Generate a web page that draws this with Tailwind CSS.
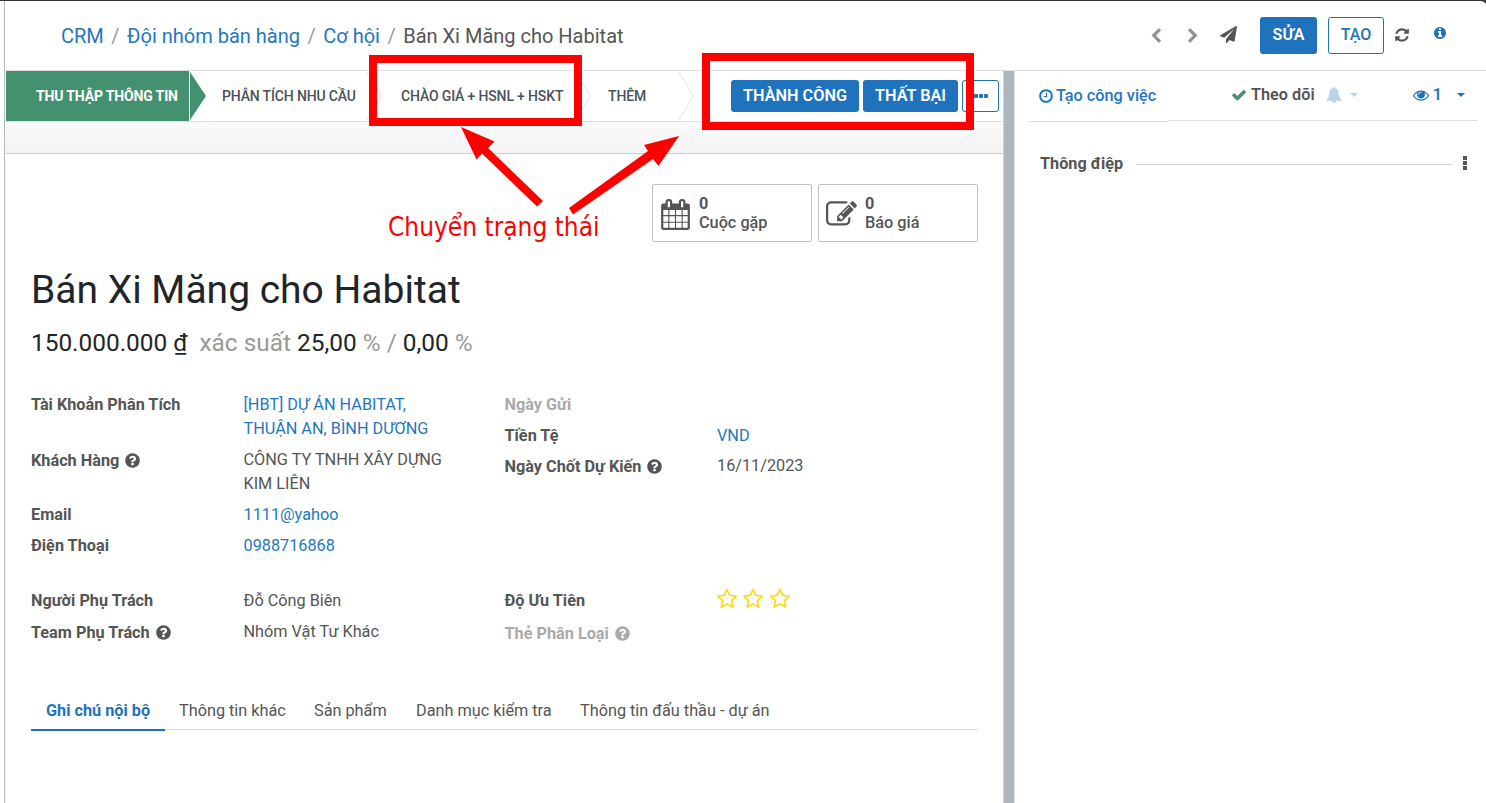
<!DOCTYPE html>
<html lang="vi">
<head>
<meta charset="utf-8">
<title>Bán Xi Măng cho Habitat</title>
<script src="https://cdn.jsdelivr.net/npm/@tailwindcss/browser@4"></script>
</head>
<body class="relative h-[803px] w-[1486px] overflow-hidden bg-white font-['Roboto','Noto_Sans',sans-serif] text-base leading-6 text-[#555]">
<svg class="hidden">
  <symbol id="question" viewBox="0 0 1792 1792"><path d="M1024 1376v-192q0-14-9-23t-23-9h-192q-14 0-23 9t-9 23v192q0 14 9 23t23 9h192q14 0 23-9t9-23zm256-672q0-88-55.500-163t-138.500-116-170-41q-243 0-371 213-15 24 8 42l132 100q7 6 19 6 16 0 25-12 53-68 86-92 34-24 86-24 48 0 85.500 26t37.500 59q0 38-20 61t-68 45q-63 28-115.500 86.500t-52.500 125.500v36q0 14 9 23t23 9h192q14 0 23-9t9-23q0-19 21.500-49.500t54.500-49.500q32-18 49-28.500t46-35 44.500-48 28-60.500 12.500-81zm384 192q0 209-103 385.500t-279.500 279.500-385.500 103-385.500-103-279.500-279.500-103-385.500 103-385.500 279.500-279.500 385.500-103 385.500 103 279.500 279.500 103 385.500z"/></symbol>
  <symbol id="star" viewBox="0 0 1792 1792"><path d="M1201 1004l306-297-422-62-189-382-189 382-422 62 306 297-73 421 378-199 377 199zm527-357q0 22-26 48l-363 354 86 500q1 7 1 20 0 50-41 50-19 0-40-12l-449-236-449 236q-22 12-40 12-21 0-31.500-14.500t-10.500-35.500q0-6 2-20l86-500-364-354q-25-27-25-48 0-37 56-46l502-73 225-455q19-41 49-41t49 41l225 455 502 73q56 9 56 46z"/></symbol>
</svg>
<div class="h-px bg-[#3a3638]"></div>
<svg class="absolute right-0 top-px h-[3px] w-1.5 fill-[#3a3638]" viewBox="0 0 6 3"><path d="M0 0H6V3Q4 0 0 0Z"/></svg>
<div class="ml-1 flex h-[802px] flex-col border-l border-[#b9babd]">
  <header class="flex h-[70px] shrink-0 items-start border-b border-[#dcdfe4]">
    <nav class="ml-14 mt-5 flex h-[30px] items-center gap-[7.500px] text-[20px] leading-[30px] text-[#1f77be]">
      <span>CRM</span><span class="text-[#999]">/</span><span>Đội nhóm bán hàng</span><span class="text-[#999]">/</span><span>Cơ hội</span><span class="text-[#999]">/</span><span class="text-[#555]">Bán Xi Măng cho Habitat</span>
    </nav>
    <div class="ml-auto mr-[39px] mt-4 flex h-[37px] items-center">
      <svg class="mr-[21px] size-4 fill-[#929292]" viewBox="0 0 1792 1792"><path d="M1427 301l-531 531 531 531q19 19 19 45t-19 45l-166 166q-19 19-45 19t-45-19l-742-742q-19-19-19-45t19-45l742-742q19-19 45-19t45 19l166 166q19 19 19 45t-19 45z"/></svg>
      <svg class="mr-[19px] size-4 fill-[#929292]" viewBox="0 0 1792 1792"><path d="M1363 877l-742 742q-19 19-45 19t-45-19l-166-166q-19-19-19-45t19-45l531-531-531-531q-19-19-19-45t19-45l166-166q19-19 45-19t45 19l742 742q19 19 19 45t-19 45z"/></svg>
      <svg class="mr-[23px] size-[17px] -translate-y-px fill-[#555]" viewBox="0 0 1792 1792"><path d="M1764 11q33 24 27 64l-256 1536q-5 29-32 45-14 8-31 8-11 0-24-5l-453-185-242 295q-18 23-49 23-13 0-22-4-19-7-30.500-23.500t-11.500-36.500v-349l864-1059-1069 925-395-162q-37-14-40-55-2-40 32-59l1664-960q15-9 32-9 20 0 36 11z"/></svg>
      <button class="mr-[11px] h-[37px] w-[57px] rounded-[3px] bg-[#1f73bc] pb-0.5 font-semibold text-white">SỬA</button>
      <button class="mr-[10px] h-[37px] w-14 rounded-[3px] border border-[#1f73bc] pb-0.5 font-medium text-[#1f73bc]">TẠO</button>
      <svg class="mr-[23px] size-4 -translate-y-px fill-[#555]" viewBox="0 0 1792 1792"><path d="M1639 1056q0 5-1 7-64 268-268 434.500t-478 166.500q-146 0-282.500-55t-243.500-157l-129 129q-19 19-45 19t-45-19-19-45v-448q0-26 19-45t45-19h448q26 0 45 19t19 45-19 45l-137 137q71 66 161 102t187 36q134 0 250-65t186-179q11-17 53-117 8-23 30-23h192q13 0 22.500 9.500t9.500 22.500zm25-800v448q0 26-19 45t-45 19h-448q-26 0-45-19t-19-45 19-45l138-138q-148-137-349-137-134 0-250 65t-186 179q-11 17-53 117-8 23-30 23h-199q-13 0-22.500-9.500t-9.500-22.500v-7q65-268 270-434.500t480-166.500q146 0 284 55.500t245 156.500l130-129q19-19 45-19t45 19 19 45z"/></svg>
      <svg class="mb-[5px] size-[14px] fill-[#1f73bc]" viewBox="0 0 1792 1792"><path d="M1152 1376v-160q0-14-9-23t-23-9h-96v-512q0-14-9-23t-23-9h-320q-14 0-23 9t-9 23v160q0 14 9 23t23 9h96v320h-96q-14 0-23 9t-9 23v160q0 14 9 23t23 9h448q14 0 23-9t9-23zm-128-896v-160q0-14-9-23t-23-9h-192q-14 0-23 9t-9 23v160q0 14 9 23t23 9h192q14 0 23-9t9-23zm640 416q0 209-103 385.500t-279.500 279.500-385.500 103-385.500-103-279.500-279.500-103-385.500 103-385.500 279.500-279.500 385.500-103 385.500 103 279.500 279.500 103 385.500z"/></svg>
    </div>
  </header>
  <div class="flex min-h-0 flex-1">
    <main class="flex w-[999px] flex-col border-r border-[#cfd3d8] bg-[#f8f8f8]">
      <div class="flex h-[51px] shrink-0 items-center border-b border-[#dcdfe4] bg-white text-[14px] font-medium tracking-[-0.15px] text-[#4c5259]">
        <div class="relative ml-px flex h-[50px] w-[183px] items-center bg-[#44916f] pl-[30px] font-bold text-white"><span class="whitespace-nowrap">THU THẬP THÔNG TIN</span>
          <svg class="absolute left-[183px] top-0 h-[50px] w-[17px] fill-[#44916f]" viewBox="0 0 17 50"><path d="M1 1L17 25L1 49Z"/></svg>
        </div>
        <span class="ml-[33px] w-[134px] whitespace-nowrap">PHÂN TÍCH NHU CẦU</span>
        <svg class="ml-2.5 h-[50px] w-4 fill-none stroke-[#e2e4e8]" viewBox="0 0 16 50"><path d="M.5 1L15.500 25L.5 49"/></svg>
        <span class="ml-[19px] w-[163px] whitespace-nowrap">CHÀO GIÁ + HSNL + HSKT</span>
        <svg class="ml-[11px] h-[50px] w-4 fill-none stroke-[#e2e4e8]" viewBox="0 0 16 50"><path d="M.5 1L15.500 25L.5 49"/></svg>
        <span class="ml-[17px] w-[38px]">THÊM</span>
        <svg class="ml-8 h-[50px] w-4 fill-none stroke-[#e2e4e8]" viewBox="0 0 16 50"><path d="M.5 1L15.500 25L.5 49"/></svg>
        <div class="ml-auto mr-1 flex gap-1 text-[16.250px] font-semibold tracking-normal text-white">
          <button class="h-8 w-32 whitespace-nowrap rounded-[3px] bg-[#1f73bc] pb-px">THÀNH CÔNG</button>
          <button class="h-8 w-[95px] rounded-[3px] bg-[#1f73bc] pb-px">THẤT BẠI</button>
          <button class="flex h-8 w-[37px] items-center justify-center gap-px rounded-[3px] border border-[#1f73bc]"><i class="size-1 rounded-[1px] bg-[#1f73bc]"></i><i class="size-1 rounded-[1px] bg-[#1f73bc]"></i><i class="size-1 rounded-[1px] bg-[#1f73bc]"></i></button>
        </div>
      </div>
      <div class="h-[31px] shrink-0 bg-linear-to-b from-[#f9f9f9] to-[#f4f4f4]"></div>
      <section class="ml-px flex flex-1 flex-col border-t border-[#c9ccd2] bg-white pl-[25px] pr-[25px] text-[16.250px]">
        <div class="mt-[30px] flex h-[58px] justify-end gap-1.5 font-medium leading-[19px]">
          <div class="flex w-40 items-center rounded-[2px] border border-[#bfc2c6] pl-[7px]">
            <svg class="mr-2 size-[31px] translate-y-px fill-[#555]" viewBox="0 0 1792 1792"><path d="M192 1664h288v-288h-288v288zm352 0h320v-288h-320v288zm-352-352h288v-320h-288v320zm352 0h320v-320h-320v320zm-352-384h288v-288h-288v288zm736 736h320v-288h-320v288zm-384-736h320v-288h-320v288zm768 736h288v-288h-288v288zm-384-352h320v-320h-320v320zm-352-864v-288q0-13-9.500-22.500t-22.500-9.500h-64q-13 0-22.500 9.500t-9.500 22.500v288q0 13 9.500 22.500t22.500 9.500h64q13 0 22.500-9.500t9.500-22.500zm736 864h288v-320h-288v320zm-384-384h320v-288h-320v288zm384 0h288v-288h-288v288zm32-480v-288q0-13-9.500-22.500t-22.500-9.500h-64q-13 0-22.500 9.500t-9.500 22.500v288q0 13 9.500 22.500t22.500 9.500h64q13 0 22.500-9.500t9.500-22.500zm384-64v1280q0 52-38 90t-90 38h-1408q-52 0-90-38t-38-90v-1280q0-52 38-90t90-38h128v-96q0-66 47-113t113-47h64q66 0 113 47t47 113v96h384v-96q0-66 47-113t113-47h64q66 0 113 47t47 113v96h128q52 0 90 38t38 90z"/></svg>
            <div><div class="font-bold">0</div><div>Cuộc gặp</div></div>
          </div>
          <div class="flex w-40 items-center rounded-[2px] border border-[#bfc2c6] pl-[7px]">
            <svg class="mr-2 size-[31px] translate-y-px fill-[#555]" viewBox="0 0 1792 1792"><path d="M888 1184l116-116-152-152-116 116v56h96v96h56zm440-720q-16-16-33 1l-350 350q-17 17-1 33t33-1l350-350q17-17 1-33zm80 594v190q0 119-84.500 203.500t-203.500 84.500h-832q-119 0-203.500-84.500t-84.500-203.500v-832q0-119 84.500-203.500t203.500-84.500h832q63 0 117 25 15 7 18 23 3 17-9 29l-49 49q-14 14-32 8-23-6-45-6h-832q-66 0-113 47t-47 113v832q0 66 47 113t113 47h832q66 0 113-47t47-113v-126q0-13 9-22l64-64q15-15 35-7t20 29zm-96-738l288 288-672 672h-288v-288zm444 132l-92 92-288-288 92-92q28-28 68-28t68 28l152 152q28 28 28 68t-28 68z"/></svg>
            <div><div class="font-bold">0</div><div>Báo giá</div></div>
          </div>
        </div>
        <h1 class="mt-6 whitespace-nowrap text-[39px] leading-[48px] text-[#212529]">Bán Xi Măng cho Habitat</h1>
        <div class="mt-[11px] whitespace-pre text-[24.400px] leading-9 text-[#999]"><span class="text-[#212529]">150.000.000 ₫</span>  xác suất <span class="text-[#212529]">25,00</span> % / <span class="text-[#212529]">0,00</span> %</div>
        <div class="mt-8 grid h-[165px] grid-cols-[212.5px_261px_212.5px_1fr]">
          <div class="flex flex-col font-bold">
            <div class="h-14">Tài Khoản Phân Tích</div>
            <div class="flex h-[54px] items-start gap-[5px]"><span>Khách Hàng</span><svg class="mt-[3px] size-[17px] fill-current"><use href="#question"/></svg></div>
            <div class="h-[31px]">Email</div>
            <div>Điện Thoại</div>
          </div>
          <div class="flex flex-col gap-[7px] text-[#1f77be]">
            <div>[HBT] DỰ ÁN HABITAT,<br>THUẬN AN, BÌNH DƯƠNG</div>
            <div class="text-[#555]">CÔNG TY TNHH XÂY DỰNG<br>KIM LIÊN</div>
            <div>1111@yahoo</div>
            <div>0988716868</div>
          </div>
          <div class="flex flex-col gap-[7px] font-bold">
            <div class="text-[#aaa]">Ngày Gửi</div>
            <div>Tiền Tệ</div>
            <div class="flex items-start gap-[5px]"><span>Ngày Chốt Dự Kiến</span><svg class="mt-[3px] size-[17px] fill-current"><use href="#question"/></svg></div>
          </div>
          <div class="flex flex-col pt-[31px]">
            <div class="h-[30px] text-[#1f77be]">VND</div>
            <div>16/11/2023</div>
          </div>
        </div>
        <div class="mt-[31px] grid h-[57px] grid-cols-[212.5px_261px_212.5px_1fr]">
          <div class="flex flex-col gap-2 font-bold"><div>Người Phụ Trách</div><div class="flex items-start gap-[5px]"><span>Team Phụ Trách</span><svg class="mt-[3px] size-[17px] fill-current"><use href="#question"/></svg></div></div>
          <div class="flex flex-col gap-[7px]"><div>Đỗ Công Biên</div><div>Nhóm Vật Tư Khác</div></div>
          <div class="flex flex-col gap-[9px] font-bold"><div>Độ Ưu Tiên</div><div class="flex items-start gap-[5px] text-[#aaa]"><span>Thẻ Phân Loại</span><svg class="mt-[3px] size-[17px] fill-current"><use href="#question"/></svg></div></div>
          <div class="-ml-[1.500px] flex h-[20px] items-center gap-[4.500px] text-[#ffd900]"><svg class="size-[22px] shrink-0 fill-current"><use href="#star"/></svg><svg class="size-[22px] shrink-0 fill-current"><use href="#star"/></svg><svg class="size-[22px] shrink-0 fill-current"><use href="#star"/></svg></div>
        </div>
        <div class="mt-11 flex h-10 items-stretch border-b border-[#dcdfe0] leading-[42px]">
          <div class="-mb-px h-[41px] w-[134px] whitespace-nowrap border-b-2 border-[#1f73bc] pl-[15px] font-bold text-[#1f73bc]">Ghi chú nội bộ</div>
          <div class="w-[135px] whitespace-nowrap pl-3.5">Thông tin khác</div>
          <div class="w-[102px] whitespace-nowrap pl-3.5">Sản phẩm</div>
          <div class="w-[164px] whitespace-nowrap pl-3.5">Danh mục kiểm tra</div>
          <div class="whitespace-nowrap pl-3.5">Thông tin đấu thầu - dự án</div>
        </div>
      </section>
    </main>
    <div class="w-[10px] bg-[#adb5bd]"></div>
    <aside class="flex-1 border-l border-[#dee2e6] text-[16.250px]">
      <div class="ml-[13px] mr-2 flex h-[51px] items-start font-medium text-[#1f77be]">
        <div class="flex h-[51px] w-[140px] items-center whitespace-nowrap border-b border-[#dcdfe4] pl-[9.500px]">
          <svg class="mr-[2.500px] size-4 fill-current" viewBox="0 0 1792 1792"><path d="M1024 544v448q0 14-9 23t-23 9h-320q-14 0-23-9t-9-23v-64q0-14 9-23t23-9h224v-352q0-14 9-23t23-9h64q14 0 23 9t9 23zm416 352q0-148-73-273t-198-198-273-73-273 73-198 198-73 273 73 273 198 198 273 73 273-73 198-198 73-273zm224 0q0 209-103 385.500t-279.500 279.500-385.500 103-385.500-103-279.500-279.500-103-385.500 103-385.500 279.500-279.500 385.500-103 385.500 103 279.500 279.500 103 385.500z"/></svg>
          <span>Tạo công việc</span>
        </div>
        <div class="flex h-[50px] flex-1 items-center border-b border-[#dcdfe4] pb-px pl-[63px] pr-[13px]">
          <svg class="mr-1 size-4 fill-[#44916f]" viewBox="0 0 1792 1792"><path d="M1671 566q0 40-28 68l-724 724-136 136q-28 28-68 28t-68-28l-136-136-362-362q-28-28-28-68t28-68l136-136q28-28 68-28t68 28l294 295 656-657q28-28 68-28t68 28l136 136q28 28 28 68z"/></svg>
          <span class="w-[75px] font-semibold text-[#555]">Theo dõi</span>
          <svg class="size-4 fill-[#b9d4ea]" viewBox="0 0 1792 1792"><path d="M912 1696q0-16-16-16-59 0-101.500-42.500t-42.500-101.500q0-16-16-16t-16 16q0 73 51.500 124.500t124.500 51.500q16 0 16-16zm816-288q0 52-38 90t-90 38h-448q0 106-75 181t-181 75-181-75-75-181h-448q-52 0-90-38t-38-90q50-42 91-88t85-119.500 74.500-158.500 50-206 19.500-260q0-152 117-282.500t307-158.500q-8-19-8-39 0-40 28-68t68-28 68 28 28 68q0 20-8 39 190 28 307 158.500t117 282.500q0 139 19.500 260t50 206 74.500 158.500 85 119.500 91 88z"/></svg>
          <svg class="ml-2 h-1 w-2 fill-[#b9d4ea]" viewBox="0 0 8 4"><path d="M0 0H8L4 4Z"/></svg>
          <svg class="ml-auto mr-1 size-4 fill-[#1f73bc]" viewBox="0 0 1792 1792"><path d="M1664 960q-152-236-381-353 61 104 61 225 0 185-131.500 316.500t-316.500 131.500-316.500-131.500-131.500-316.500q0-121 61-225-229 117-381 353 133 205 333.500 326.500t434.500 121.500 434.500-121.500 333.500-326.500zm-720-384q0-20-14-34t-34-14q-125 0-214.500 89.500t-89.500 214.500q0 20 14 34t34 14 34-14 14-34q0-86 61-147t147-61q20 0 34-14t14-34zm848 384q0 34-20 69-140 230-376.500 368.500t-499.500 138.500-499.500-139-376.500-368q-20-35-20-69t20-69q140-229 376.500-368t499.500-139 499.500 139 376.500 368q20 35 20 69z"/></svg>
          <span class="mr-[15px] font-semibold">1</span>
          <svg class="h-1 w-2 fill-[#1f73bc]" viewBox="0 0 8 4"><path d="M0 0H8L4 4Z"/></svg>
        </div>
      </div>
      <div class="ml-[25px] mr-[19px] mt-[30px] flex h-6 items-center">
        <span class="w-24 font-bold">Thông điệp</span><span class="h-px flex-1 bg-[#ced4da]"></span>
        <span class="ml-2.5 flex w-1 -translate-y-px flex-col gap-[1.500px] self-center"><i class="h-[3.500px] bg-[#555]"></i><i class="h-[3.500px] bg-[#555]"></i><i class="h-[3.500px] bg-[#555]"></i></span>
      </div>
    </aside>
  </div>
</div>
<!-- annotation layer -->
<div class="absolute left-[369px] top-[55px] h-[71px] w-[213px] border-8 border-[#f00]"></div>
<div class="absolute left-[702px] top-[53px] h-[77px] w-[272px] border-8 border-[#f00]"></div>
<svg class="absolute left-0 top-0 h-[260px] w-[740px] fill-[#f00]" viewBox="0 0 740 260"><path d="M461 127L494.500 141.500L488 148L543 201L537 206.500L482 153.500L476.500 159.500Z"/><path d="M679 136L658.500 166L653 159L573 214.500L569 208L648 151L644 145Z"/></svg>
<div class="absolute left-[388px] top-[209px] whitespace-nowrap font-['DejaVu_Sans_Condensed','DejaVu_Sans',sans-serif] text-[26px] leading-9 text-[#f00]">Chuyển trạng thái</div>
</body>
</html>
